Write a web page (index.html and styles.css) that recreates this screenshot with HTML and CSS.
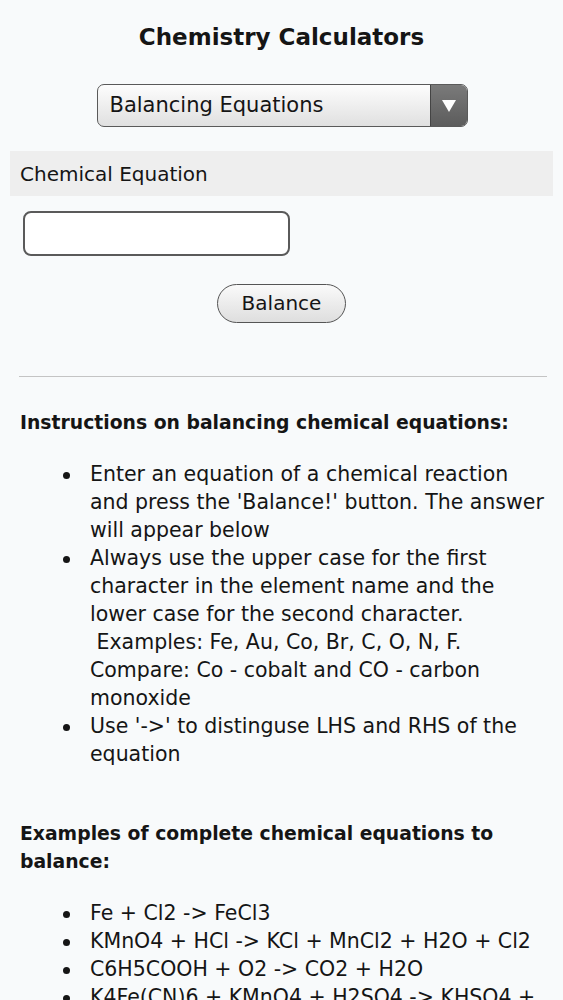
FILE: index.html
```html
<!DOCTYPE html>
<html>
<head>
<meta charset="utf-8">
<link rel="stylesheet" href="styles.css">
</head>
<body>
<div class="page">
  <h1 class="title">Chemistry Calculators</h1>
  <div class="select-row">
    <div class="select">
      <span class="select-label">Balancing Equations</span>
      <span class="select-arrow"><svg width="14" height="12" viewBox="0 0 14 12"><path d="M0 0 L14 0 L7 12 Z" fill="#fff"/></svg></span>
    </div>
  </div>
  <div class="band">Chemical Equation</div>
  <div class="input-row"><div class="text-input"></div></div>
  <div class="button-row"><div class="btn">Balance</div></div>
  <div class="rule"></div>
  <h2 class="heading">Instructions on balancing chemical equations:</h2>
  <ul class="list">
    <li>Enter an equation of a chemical reaction and press the 'Balance!' button. The answer will appear below</li>
    <li>Always use the upper case for the first character in the element name and the lower case for the second character.<br>&nbsp;Examples: Fe, Au, Co, Br, C, O, N, F.<br>Compare: Co - cobalt and CO - carbon monoxide</li>
    <li>Use '-&gt;' to distinguse LHS and RHS of the equation</li>
  </ul>
  <h2 class="heading heading-2">Examples of complete chemical equations to balance:</h2>
  <ul class="list">
    <li>Fe + Cl2 -&gt; FeCl3</li>
    <li>KMnO4 + HCl -&gt; KCl + MnCl2 + H2O + Cl2</li>
    <li>C6H5COOH + O2 -&gt; CO2 + H2O</li>
    <li>K4Fe(CN)6 + KMnO4 + H2SO4 -&gt; KHSO4 + Fe2(SO4)3 + MnSO4 + HNO3 + CO2 + H2O</li>
  </ul>
</div>
</body>
</html>
```

FILE: styles.css
```css
html, body {
  margin: 0;
  padding: 0;
  background: #f8fafb;
}
body {
  font-family: "DejaVu Sans", sans-serif;
  color: #151515;
  font-size: 20px;
  line-height: 28px;
}
.page {
  padding: 0 10px;
}
.title {
  margin: 0;
  padding-top: 20px;
  height: 84px;
  box-sizing: border-box;
  text-align: center;
  font-size: 23px;
  line-height: 34px;
  font-weight: bold;
}
.select-row {
  display: flex;
  justify-content: center;
  padding-left: 1px;
}
.select {
  width: 371px;
  height: 43px;
  box-sizing: border-box;
  border: 1px solid #5a5a5a;
  border-radius: 7px;
  display: flex;
  overflow: hidden;
  background: linear-gradient(#fdfdfd, #e0e0e0);
}
.select-label {
  flex: 1;
  padding-left: 12px;
  line-height: 41px;
  font-size: 21px;
}
.select-arrow {
  width: 36px;
  background: linear-gradient(#7a7a7a, #5c5c5c);
  border-left: 1px solid #444;
  display: flex;
  align-items: center;
  justify-content: center;
}
.band {
  margin-top: 24px;
  height: 45px;
  background: #eeeeee;
  padding-left: 10px;
  line-height: 47px;
  font-size: 20px;
}
.input-row {
  padding: 15px 0 0 13px;
}
.text-input {
  width: 267px;
  height: 45px;
  box-sizing: border-box;
  border: 2px solid #5a5a5a;
  border-radius: 8px;
  background: #fff;
}
.button-row {
  display: flex;
  justify-content: center;
  margin-top: 28px;
}
.btn {
  width: 129px;
  height: 39px;
  box-sizing: border-box;
  border: 1px solid #555;
  border-radius: 20px;
  background: linear-gradient(#fafafa, #dedede);
  text-align: center;
  line-height: 37px;
  font-size: 20px;
}
.rule {
  margin: 53px 6px 0 9px;
  height: 1px;
  background: #c4c4c4;
}
.heading {
  margin: 32px 0 0 10px;
  font-size: 18.8px;
  line-height: 28px;
  font-weight: bold;
}
.heading-2 {
  margin-top: 52px;
}
.list {
  margin: 23px 0 0 0;
  padding: 0 8px 0 80px;
  list-style: none;
  font-size: 20.5px;
}
.list li::before {
  content: "";
  display: inline-block;
  width: 7px;
  height: 7px;
  border-radius: 50%;
  background: #151515;
  margin-left: -27px;
  margin-right: 20px;
  vertical-align: middle;
}
```
